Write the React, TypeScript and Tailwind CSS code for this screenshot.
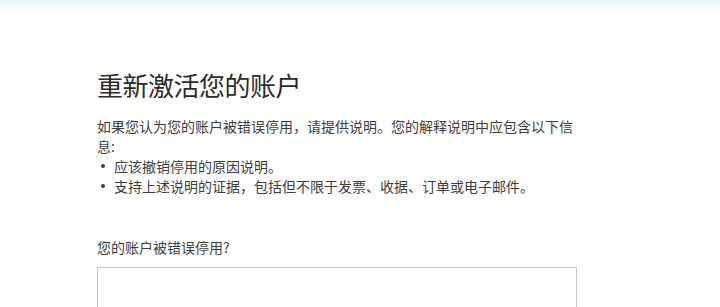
export default function App() {
  return (
    <div className="h-screen overflow-hidden bg-white font-['Noto_Sans_CJK_SC','Noto_Sans',sans-serif] text-[#3d3d3d]">
      <div className="h-[12px] bg-gradient-to-b from-[#eaf6f8] to-white" />
      <div className="pl-[97px] pt-[57px]">
        <div className="w-[480px]">
          <h1 className="text-[26px] leading-[32px] font-normal text-[#2b2b2b] tracking-[-0.5px]">重新激活您的账户</h1>
          <p className="mt-[15px] text-[14px] leading-[20px]">
            如果您认为您的账户被错误停用，请提供说明。您的解释说明中应包含以下信息:
          </p>
          <ul className="text-[14px] leading-[20px]">
            <li className="flex items-start">
              <span className="flex h-[20px] w-[17px] shrink-0 items-center pl-[4px]">
                <span className="size-[4px] rounded-full bg-[#3d3d3d]" />
              </span>
              <span>应该撤销停用的原因说明。</span>
            </li>
            <li className="flex items-start">
              <span className="flex h-[20px] w-[17px] shrink-0 items-center pl-[4px]">
                <span className="size-[4px] rounded-full bg-[#3d3d3d]" />
              </span>
              <span>支持上述说明的证据，包括但不限于发票、收据、订单或电子邮件。</span>
            </li>
          </ul>
          <label className="mt-[41px] block text-[14px] leading-[20px]">您的账户被错误停用?</label>
          <textarea className="mt-[10px] block h-[100px] w-[480px] resize-none border border-[#c8c8c8] bg-white" />
        </div>
      </div>
    </div>
  );
}
